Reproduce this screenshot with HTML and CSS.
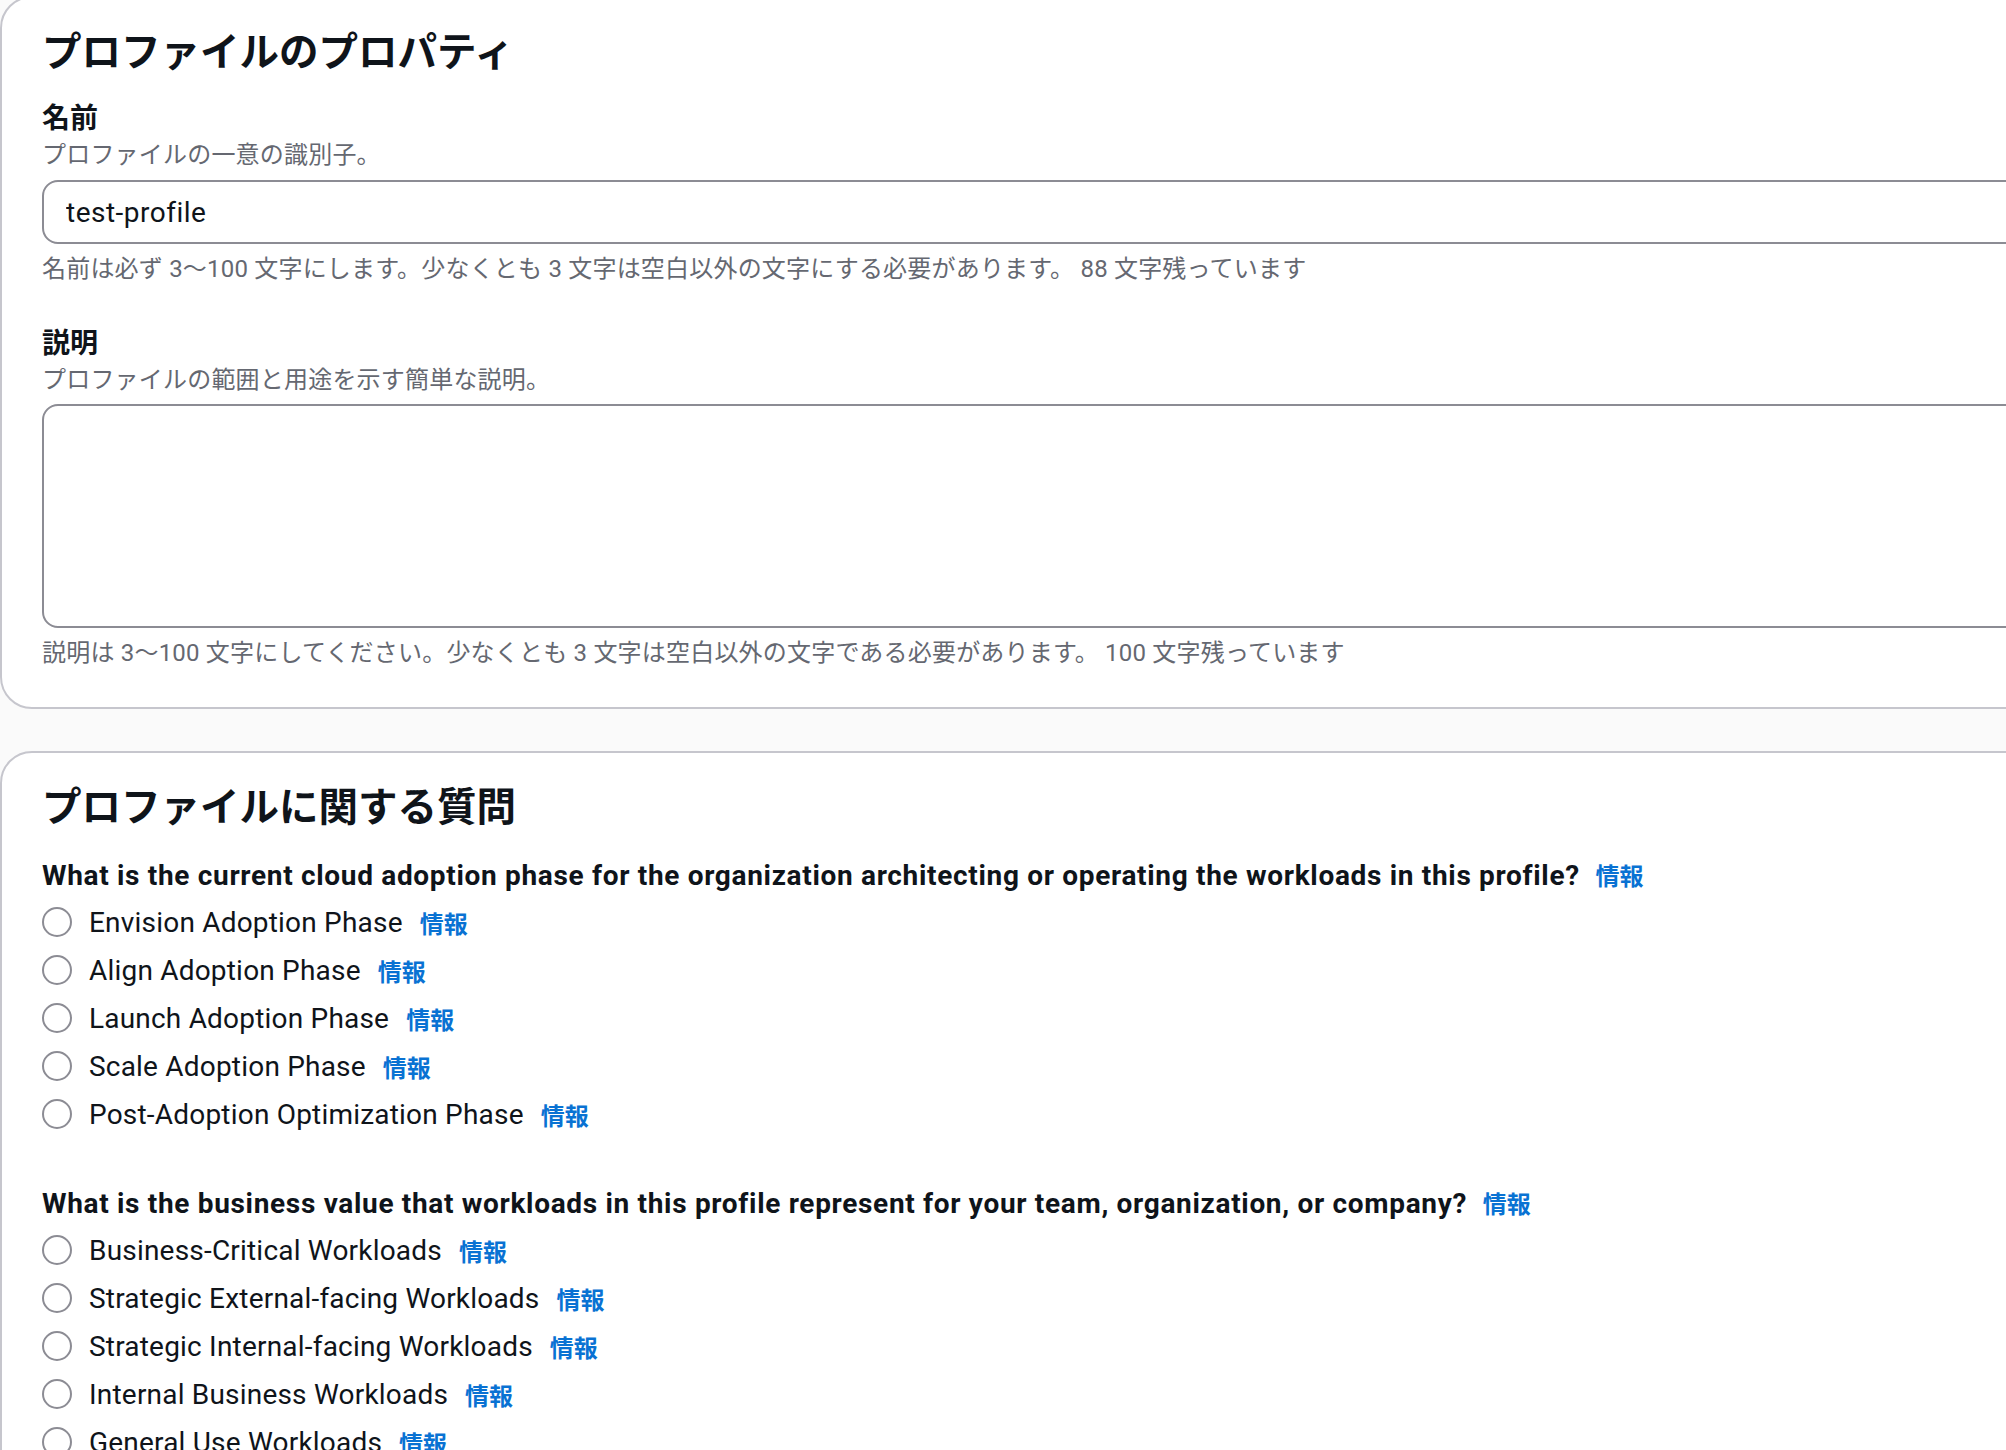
FILE: index.html
```html
<!DOCTYPE html>
<html lang="ja">
<head>
  <meta charset="UTF-8">
  <meta name="viewport" content="width=device-width, initial-scale=1.0">
  <title>プロファイルの作成</title>
  <link rel="stylesheet" href="styles.css">
</head>
<body>
  <main class="page">
    <section class="card">
      <h2 class="card-title">プロファイルのプロパティ</h2>

      <div class="field">
        <label class="field-label" for="profileName">名前</label>
        <div class="field-desc">プロファイルの一意の識別子。</div>
        <input id="profileName" class="text-input" type="text" value="test-profile">
        <div class="field-hint">名前は必ず 3〜100 文字にします。少なくとも 3 文字は空白以外の文字にする必要があります。 88 文字残っています</div>
      </div>

      <div class="field">
        <label class="field-label" for="profileDesc">説明</label>
        <div class="field-desc">プロファイルの範囲と用途を示す簡単な説明。</div>
        <textarea id="profileDesc" class="text-input text-area"></textarea>
        <div class="field-hint">説明は 3〜100 文字にしてください。少なくとも 3 文字は空白以外の文字である必要があります。 100 文字残っています</div>
      </div>
    </section>

    <section class="card">
      <h2 class="card-title">プロファイルに関する質問</h2>

      <fieldset class="question-group">
        <legend class="question">What is the current cloud adoption phase for the organization architecting or operating the workloads in this profile? <a class="info-link" href="#">情報</a></legend>
        <div class="options" id="adoptionOptions"></div>
      </fieldset>

      <fieldset class="question-group">
        <legend class="question">What is the business value that workloads in this profile represent for your team, organization, or company? <a class="info-link" href="#">情報</a></legend>
        <div class="options" id="valueOptions"></div>
      </fieldset>
    </section>
  </main>

  <script>
    const questions = {
      adoptionOptions: {
        name: 'adoption',
        items: [
          'Envision Adoption Phase',
          'Align Adoption Phase',
          'Launch Adoption Phase',
          'Scale Adoption Phase',
          'Post-Adoption Optimization Phase'
        ]
      },
      valueOptions: {
        name: 'value',
        items: [
          'Business-Critical Workloads',
          'Strategic External-facing Workloads',
          'Strategic Internal-facing Workloads',
          'Internal Business Workloads',
          'General Use Workloads'
        ]
      }
    };

    Object.keys(questions).forEach((id) => {
      const box = document.getElementById(id);
      const q = questions[id];

      q.items.forEach((text, index) => {
        const row = document.createElement('label');
        row.className = 'option';
        row.innerHTML = `
          <input class="radio" type="radio" name="${q.name}" value="${index}">
          <span class="option-text">${text}</span>
          <a class="info-link" href="#">情報</a>
        `;
        box.appendChild(row);
      });
    });
  </script>
</body>
</html>
```

FILE: styles.css
```css
body {
  margin: 0;
  background-color: #fafafa;
  color: #0f141a;
  font-family: Roboto, "Noto Sans CJK JP", sans-serif;
  overflow: hidden;
}

.page {
  width: 2300px;
  margin-top: -4px;
}

.card {
  background-color: #fff;
  border: 2px solid #c6c6cd;
  border-radius: 32px;
  padding: 31px 40px 38px;
}

.card + .card {
  margin-top: 42px;
}

.card-title {
  margin: 0 0 22px;
  font-size: 39.5px;
  line-height: 48px;
  font-weight: 700;
}

.field + .field {
  margin-top: 39px;
}

.field-label {
  display: block;
  font-size: 28px;
  line-height: 40px;
  font-weight: 700;
}

.field-desc,
.field-hint {
  font-size: 24px;
  line-height: 32px;
  color: #656871;
  letter-spacing: 0.2px;
}

.field-hint {
  margin-top: 9px;
}

.text-input {
  display: block;
  box-sizing: border-box;
  width: 100%;
  height: 64px;
  margin-top: 9px;
  padding: 0 22px;
  border: 2px solid #8c8c94;
  border-radius: 16px;
  background-color: #fff;
  font-family: inherit;
  font-size: 28px;
  letter-spacing: 0.5px;
  color: #0f141a;
}

.text-area {
  height: 224px;
  margin-top: 8px;
  resize: none;
}

.question-group {
  margin: 24px 0 0;
  padding: 0;
  border: none;
}

.question-group + .question-group {
  margin-top: 46px;
}

.question {
  padding: 0;
  font-size: 28px;
  line-height: 40px;
  font-weight: 700;
  letter-spacing: 0.68px;
}

.options {
  margin-top: 1px;
}

.option {
  display: flex;
  align-items: center;
  height: 48px;
  font-size: 28px;
  letter-spacing: 0.2px;
}

.radio {
  appearance: none;
  box-sizing: border-box;
  width: 30px;
  height: 30px;
  margin: 0 17px 0 0;
  border: 2px solid #8c8c94;
  border-radius: 50%;
  background-color: #fff;
}

.info-link {
  margin-left: 8px;
  color: #0972d3;
  font-size: 24px;
  font-weight: 700;
  letter-spacing: 0;
  text-decoration: none;
}

.option .info-link {
  margin-left: 17px;
}
```
